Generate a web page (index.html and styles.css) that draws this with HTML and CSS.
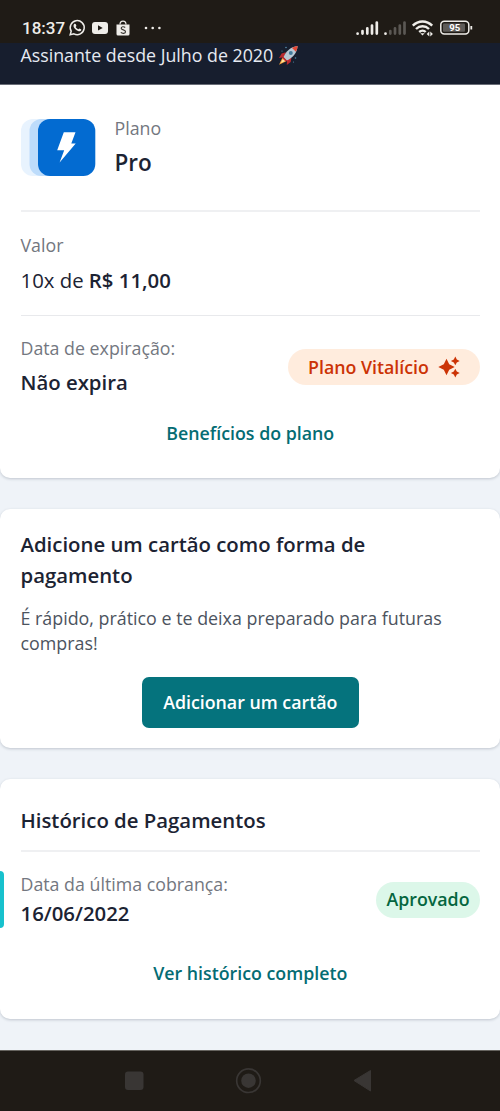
FILE: index.html
```html
<!DOCTYPE html>
<html lang="pt-BR">
<head>
<meta charset="utf-8">
<meta name="viewport" content="width=device-width">
<title>Assinatura</title>
<link rel="stylesheet" href="styles.css">
</head>
<body>
<div class="status">
  <span class="clock">18:37</span>
  <svg class="status-left" width="96" height="18" viewBox="68 19 96 18">
    <g fill="none" stroke="#efede9" stroke-width="1.5"><path d="M70.2 34.8l1-3.6a7 7 0 1 1 2.7 2.6z"/></g>
    <path d="M74 24.2c.8-.8 1.6-.5 1.9.3l.5 1.2c.1.5-.7 1-.7 1.4.5 1 1.4 1.8 2.4 2.2.5.1.9-1 1.4-.9l1.5.8c.6.3.2 1.5-.6 1.9-2 1-6.700-2.300-6.900-5.100 0-.7.100-1.400.5-1.800z" fill="#efede9"/>
    <rect x="92" y="22" width="16" height="12" rx="3" fill="#efede9"/><path d="M98 25.200v5.400l4.700-2.700z" fill="#1f1b16"/>
    <path d="M116.500 24.500h13v9.500a1.500 1.500 0 0 1-1.500 1.500h-10a1.500 1.500 0 0 1-1.500-1.500z" fill="#efede9"/>
    <path d="M120 24.500c0-4.600 6-4.600 6 0" fill="none" stroke="#efede9" stroke-width="1.200"/>
    <path d="M125.200 27.500c-1.300-1.200-4-1-4 .7 0 2 4.300 1.300 4.300 3.500 0 2-3.300 2-4.700.7" fill="none" stroke="#3a3733" stroke-width="1.200"/>
    <g fill="#efede9"><circle cx="146" cy="28" r="1.300"/><circle cx="152.700" cy="28" r="1.300"/><circle cx="159.400" cy="28" r="1.300"/></g>
  </svg>
  <svg class="status-right" width="118" height="18" viewBox="355 19 118 18">
    <g stroke="#efede9" stroke-width="2.700" stroke-linecap="round"><path d="M357.600 33.500v.2M362.500 31v2.600M367.300 28.300v5.300M372 25.600v8M376.800 22.500v11.100M385.500 33.500v.2"/></g>
    <g stroke="#5b5854" stroke-width="2.700" stroke-linecap="round"><path d="M390.300 31v2.600M395 28.300v5.300M399.800 25.600v8M404.500 22.500v11.100"/></g>
    <g fill="none" stroke="#efede9" stroke-width="2.400"><path d="M412.800 25.700c5.500-5.600 14-5.600 19.400 0M416 29c3.800-3.700 9.300-3.700 13 0M419.200 32c2-1.800 4.700-1.800 6.500 0"/></g>
    <path d="M420.300 33.200h4.400l-2.200 2.300zM429.300 31.500v5l-2.600-2.500zM430.300 31.500v5l2.600-2.500z" fill="#efede9"/>
    <rect x="440.800" y="21.300" width="28" height="12.700" rx="3.500" fill="none" stroke="#efede9" stroke-width="1.500"/>
    <rect x="443" y="23.500" width="22" height="8.300" rx="1" fill="#5e5b58"/>
    <path d="M471.300 26v3.500" stroke="#efede9" stroke-width="1.800"/>
    <text x="454.800" y="31.300" text-anchor="middle" class="battery-text">95</text>
  </svg>
</div>
<header class="header">
  <span>Assinante desde Julho de 2020</span>
  <svg width="21" height="21" viewBox="0 0 21 21">
    <path d="M8 7.200 3.600 8.500 1 13l5-.8zM13.500 12.500 12.700 17 8.800 20l.2-5z" fill="#b8292f"/>
    <path d="M4.500 12.500 1 19.700l7.300-3.500z" fill="#f5a13b"/><path d="M5 13.700 2.900 18l4.300-2z" fill="#ffe6a0"/>
    <path d="M5.500 12.200C8 6 12.500 2 19.600 1c-.5 7-4.600 11.800-10.900 14.500z" fill="#b9c8d4"/>
    <path d="M14 2.900c1.700-1 3.600-1.700 5.600-1.900-.1 2-.7 4-1.700 5.700z" fill="#e34835"/>
    <circle cx="12.800" cy="8" r="2" fill="#447b9c"/><path d="M5.200 11.700l4 4-1.600.7-3.200-3.200z" fill="#c92f35"/>
    <g fill="#558cab"><circle cx="8" cy="2.500" r=".8"/><circle cx="4" cy="6" r=".6"/><circle cx="17.500" cy="13" r=".8"/><circle cx="15.500" cy="17" r=".6"/></g>
  </svg>
</header>
<main>
  <section class="card plan-card">
    <div class="plan">
      <svg width="75" height="58" viewBox="0 0 75 58">
        <rect x="0" y="0" width="57" height="57" rx="12" fill="#e8f3fe"/>
        <rect x="8.500" y="0" width="57" height="57" rx="12" fill="#bddcfb"/>
        <rect x="17" y="0" width="57.300" height="57" rx="12" fill="#036bd1"/>
        <path d="M42.800 13.200H54.500L50.300 24.400H54.700L38.600 43.500 43.200 31.200H36.200z" fill="#fff"/>
      </svg>
      <div><p class="label">Plano</p><p class="value plan-name">Pro</p></div>
    </div>
    <div class="price"><p class="label">Valor</p><p class="value regular">10x de <b>R$ 11,00</b></p></div>
    <div class="expiry">
      <div><p class="label">Data de expiração:</p><p class="value">Não expira</p></div>
      <div class="badge lifetime"><span>Plano Vitalício</span>
        <svg width="22" height="22" viewBox="0 0 22 22" fill="#cc3305"><path d="M8.500 2.700 11.200 8.300 16.700 11 11.200 13.700 8.500 19.200 5.800 13.700.300 11 5.800 8.300zM17.300.5l1.500 2.900 2.900 1.500-2.900 1.500-1.500 2.900-1.500-2.900-2.900-1.500 2.900-1.500zM17.300 12.700l1.500 2.900 2.900 1.500-2.900 1.500-1.500 2.900-1.500-2.900-2.900-1.500 2.900-1.500z"/></svg>
      </div>
    </div>
    <a class="link">Benefícios do plano</a>
  </section>
  <section class="card payment-card">
    <h2>Adicione um cartão como forma de pagamento</h2>
    <p class="description">É rápido, prático e te deixa preparado para futuras compras!</p>
    <button class="button">Adicionar um cartão</button>
  </section>
  <section class="card history-card">
    <h2>Histórico de Pagamentos</h2>
    <div class="charge">
      <i class="marker"></i>
      <div class="charge-info"><p class="label">Data da última cobrança:</p><p class="value">16/06/2022</p></div>
      <div class="badge approved">Aprovado</div>
    </div>
    <a class="link">Ver histórico completo</a>
  </section>
</main>
<nav class="navbar">
  <svg width="500" height="60" viewBox="0 0 500 60" fill="#393634"><rect x="125" y="20.500" width="18.500" height="18.500" rx="3"/><circle cx="248.500" cy="29.700" r="7.300"/><circle cx="248.500" cy="29.700" r="11.800" fill="none" stroke="#393634" stroke-width="1.700"/><path d="M354 29.500 370.500 19.500v20.500z" stroke="#393634" stroke-linejoin="round"/></svg>
</nav>
</body>
</html>
```

FILE: styles.css
```css
* { box-sizing: border-box; }
body { margin: 0; width: 500px; height: 1111px; overflow: hidden; background: #eff3f8; color: #1c2333; font-family: "Open Sans", sans-serif; }
p, h2 { margin: 0; }
.status { height: 43px; padding: 13px 27px 0 22px; background: #1f1b16; display: flex; align-items: center; }
.clock { width: 46px; color: #efede9; font: 500 17px/24px Roboto, sans-serif; white-space: nowrap; }
.status-right { margin-left: auto; }
.battery-text { font: 700 9.5px Roboto, sans-serif; fill: #fff; }
.header { height: 42px; padding: 0 20.5px; background: #171e2e; border-bottom: 1px solid #6c707a; display: flex; gap: 5px; align-items: flex-start; color: #e6eaf2; font-size: 17.8px; line-height: 25px; white-space: nowrap; }
.header svg { margin-top: 2px; }
.card { position: relative; background: #fff; border-radius: 10px; padding: 0 20px 0 20.5px; margin-bottom: 31px; box-shadow: 0 1px 3px rgba(25, 35, 60, .22); }
.plan-card { height: 393px; border-radius: 0 0 10px 10px; }
.plan { height: 125px; padding-top: 30px; display: flex; gap: 19px; }
.plan > svg { margin-top: 4px; }
.label { color: #737780; font-size: 17.8px; line-height: 26px; }
.value { font-weight: 600; font-size: 20.35px; line-height: 30px; }
.regular { font-weight: 400; margin-top: 7px; }
.regular b { font-weight: 600; }
.plan-name { font-size: 22.500px; margin-top: 7px; }
.price { height: 105px; padding-top: 20px; border-top: 2px solid #eff0f2; }
.expiry { height: 105px; padding-top: 19px; border-top: 1px solid #e8e9ec; display: flex; justify-content: space-between; }
.expiry .value { margin-top: 6px; }
.badge { display: flex; align-items: center; border-radius: 18px; height: 36px; font-weight: 600; font-size: 17.800px; }
.lifetime { width: 192px; padding: 0 20px 1px; justify-content: space-between; margin-top: 14px; background: #ffecdd; color: #cc3305; white-space: nowrap; }
.link { display: block; text-align: center; color: #046c73; font-weight: 600; font-size: 17.800px; line-height: 26px; }
.payment-card { height: 239px; padding-top: 20px; text-align: center; }
h2 { font-weight: 600; font-size: 20.350px; line-height: 30.500px; text-align: left; }
.description { color: #4c535e; text-align: left; font-size: 17.850px; line-height: 25.500px; margin-top: 15.500px; }
.button { display: block; margin: 20.500px auto 0; width: 217px; height: 51px; padding: 0 0 1px; border: 0; border-radius: 7px; background: #05737d; color: #fff; font: 600 17.800px "Open Sans", sans-serif; }
.history-card { height: 240px; padding-top: 26px; }
.charge { position: relative; display: flex; justify-content: space-between; border-top: 2px solid #eff0f2; margin-top: 14px; height: 110px; padding-top: 19px; }
.marker { position: absolute; left: -20.5px; top: 19px; width: 4px; height: 57px; border-radius: 0 4px 4px 0; background: #17c1cd; }
.charge .value { line-height: 32px; }
.approved { width: 104px; padding-bottom: 1px; justify-content: center; margin-top: 11px; background: #dcf7e9; color: #05663f; }
.navbar { height: 61px; margin-top: 0; background: #1f1b16; border-top: 1px solid #66645f; }
.navbar svg { display: block; }
```
